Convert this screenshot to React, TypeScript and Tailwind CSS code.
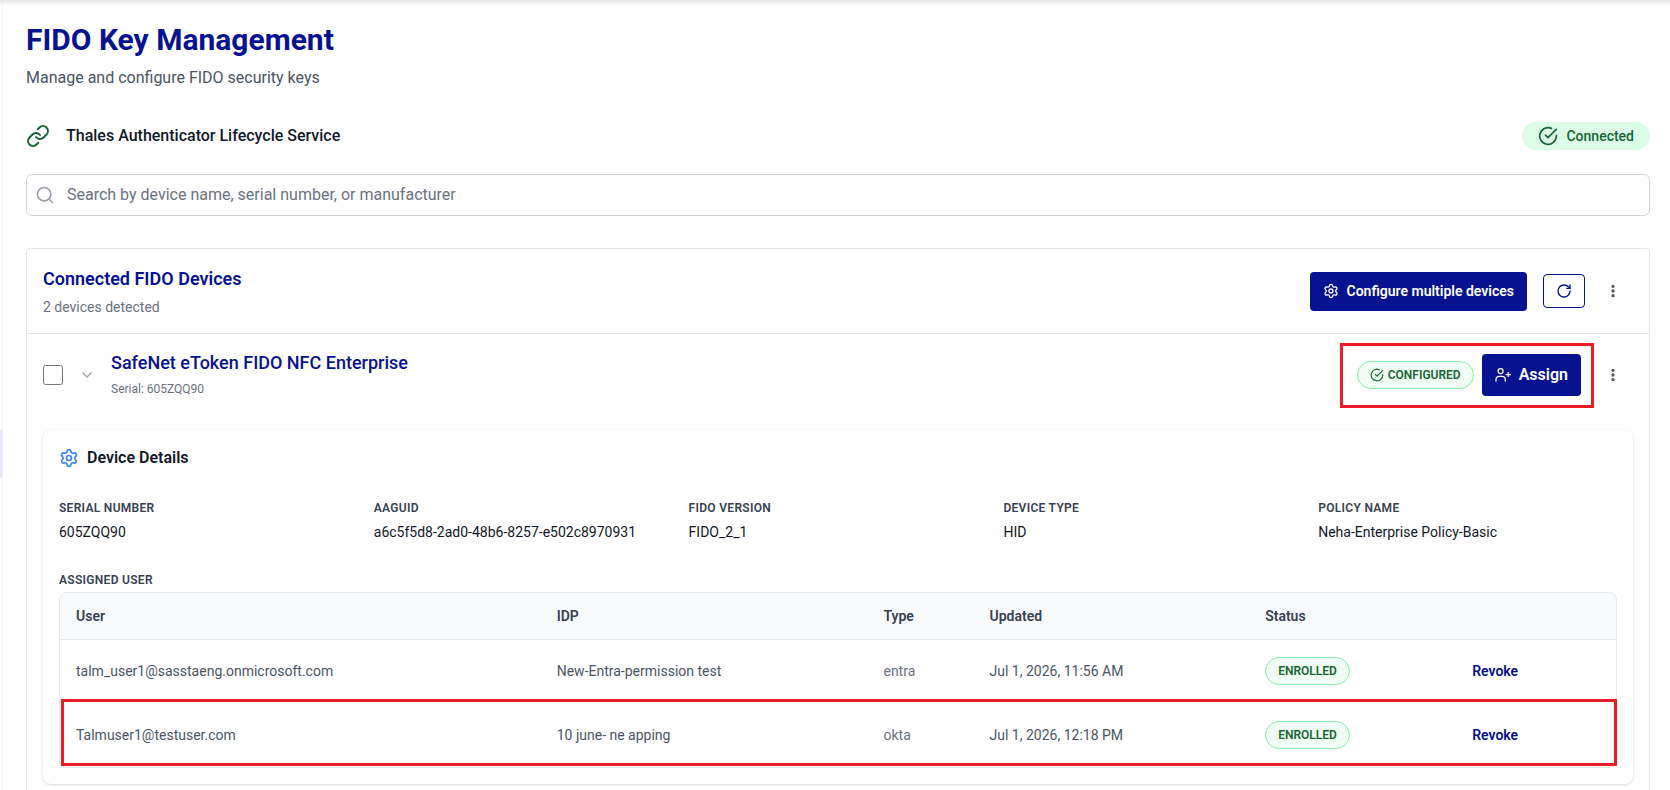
import { useState } from 'react';
import { ChevronDown, MoreVertical, RotateCw, Search, Settings } from 'lucide-react';
import { FiCheckCircle, FiLink } from 'react-icons/fi';
import clsx from 'clsx';

type Assignment = {
  user: string;
  idp: string;
  type: string;
  updated: string;
  status: string;
  highlighted?: boolean;
};

const details = [
  { label: 'Serial Number', value: '605ZQQ90' },
  { label: 'AAGUID', value: 'a6c5f5d8-2ad0-48b6-8257-e502c8970931' },
  { label: 'FIDO Version', value: 'FIDO_2_1' },
  { label: 'Device Type', value: 'HID' },
  { label: 'Policy Name', value: 'Neha-Enterprise Policy-Basic' },
];

const assignments: Assignment[] = [
  {
    user: 'talm_user1@sasstaeng.onmicrosoft.com',
    idp: 'New-Entra-permission test',
    type: 'entra',
    updated: 'Jul 1, 2026, 11:56 AM',
    status: 'ENROLLED',
  },
  {
    user: 'Talmuser1@testuser.com',
    idp: '10 june- ne apping',
    type: 'okta',
    updated: 'Jul 1, 2026, 12:18 PM',
    status: 'ENROLLED',
    highlighted: true,
  },
];

function UserAddIcon() {
  return (
    <svg width="16" height="16" viewBox="0 0 16 16" fill="none" stroke="currentColor" strokeWidth="1.25" strokeLinecap="round" aria-hidden="true">
      <circle cx="5.6" cy="4" r="2.5" />
      <path d="M1 14v-1.300C1 10.600 2.600 9.300 4.300 9.300h2.700c1.700 0 3.300 1.300 3.300 3.400V14" />
      <path d="M13.200 5.400v4.200M11.100 7.500h4.200" />
    </svg>
  );
}

function StatusPill({ children }: { children: React.ReactNode }) {
  return (
    <span className="inline-flex h-7 items-center gap-1 rounded-full border border-[#86efac] bg-[#f0fdf4] px-3 text-xs font-semibold text-[#166534]">
      {children}
    </span>
  );
}

function KebabButton({ label }: { label: string }) {
  return (
    <button type="button" aria-label={label} className="flex size-10 items-center justify-center text-[#4b5563]">
      <MoreVertical size={16} fill="currentColor" strokeWidth={3} />
    </button>
  );
}

function AssignedUsers() {
  return (
    <div className="rounded-lg border border-[#e5e7eb]">
      <table className="w-full text-left text-sm text-[#4b5563]">
        <thead className="text-[#374151]">
          <tr className="h-[46px] border-b border-[#e5e7eb]">
            <th className="rounded-tl-lg bg-[#f9fafb] px-4 font-semibold">User</th>
            <th className="bg-[#f9fafb] px-4 font-semibold">IDP</th>
            <th className="bg-[#f9fafb] px-4 font-semibold">Type</th>
            <th className="bg-[#f9fafb] px-4 font-semibold">Updated</th>
            <th className="bg-[#f9fafb] px-4 font-semibold">Status</th>
            <th className="rounded-tr-lg bg-[#f9fafb] px-4" />
          </tr>
        </thead>
        <tbody>
          {assignments.map(row => (
            <tr key={row.user} className={clsx('h-16', row.highlighted && 'relative')}>
              <td className="px-4">
                {row.user}
                {row.highlighted && (
                  <span className="pointer-events-none absolute -top-1 -right-px bottom-px left-px border-3 border-[#ed1c24]" />
                )}
              </td>
              <td className="px-4">{row.idp}</td>
              <td className="px-4 text-[#6b7280]">{row.type}</td>
              <td className="px-4">{row.updated}</td>
              <td className="px-4"><StatusPill>{row.status}</StatusPill></td>
              <td className="px-4">
                <button type="button" className="px-[13px] font-semibold text-[#06128f]">Revoke</button>
              </td>
            </tr>
          ))}
        </tbody>
      </table>
    </div>
  );
}

function DeviceDetails() {
  return (
    <section className="rounded-lg bg-white p-4 shadow-[0_1px_3px_rgba(0,0,0,0.16)]">
      <div className="flex items-center gap-2">
        <Settings size={20} className="text-[#3b82f6]" />
        <h4 className="text-base font-semibold text-[#111827]">Device Details</h4>
      </div>
      <dl className="mt-[30px] grid grid-cols-5 gap-4">
        {details.map(item => (
          <div key={item.label}>
            <dt className="text-xs font-semibold tracking-wide text-[#374151] uppercase">{item.label}</dt>
            <dd className="mt-1.5 text-sm text-[#111827]">{item.value}</dd>
          </div>
        ))}
      </dl>
      <h5 className="mt-[30px] mb-1 text-xs font-semibold tracking-wide text-[#374151] uppercase">Assigned User</h5>
      <AssignedUsers />
    </section>
  );
}

export default function App() {
  const [query, setQuery] = useState('');
  const [selected, setSelected] = useState(false);

  return (
    <div className="relative flex min-h-screen overflow-hidden bg-white font-[Roboto,sans-serif]">
      {/* bottom shadow of the app header */}
      <div className="pointer-events-none absolute inset-x-0 top-0 h-1.5 bg-linear-to-b from-[#e5e5e9] to-transparent" />
      {/* collapsed side navigation */}
      <nav aria-label="Main" className="w-[3px] shrink-0 border-r border-[#f3f4f6] pt-[430px]">
        <div className="h-12 bg-[#e6e8f6]" />
      </nav>

      <main className="min-w-0 flex-1 pt-5 pr-5 pl-[23px]">
        <h1 className="text-3xl leading-10 font-bold text-[#06128f]">FIDO Key Management</h1>
        <p className="mt-1.5 text-base text-[#4b5563]">Manage and configure FIDO security keys</p>

        <div className="mt-8 flex items-center justify-between">
          <div className="flex items-center gap-4">
            <FiLink size={24} className="text-[#166534]" />
            <h2 className="text-base font-medium text-[#111827]">Thales Authenticator Lifecycle Service</h2>
          </div>
          <span className="flex h-7 items-center gap-2 rounded-full bg-[#dcfce7] px-4 text-sm font-medium text-[#166534]">
            <FiCheckCircle size={20} />
            Connected
          </span>
        </div>

        <label className="mt-6 flex h-[42px] items-center gap-3 rounded-md border border-[#d1d5db] px-2">
          <Search size={20} className="text-[#9ca3af]" />
          <input
            type="text"
            value={query}
            onChange={e => setQuery(e.target.value)}
            aria-label="Search devices"
            placeholder="Search by device name, serial number, or manufacturer"
            className="flex-1 text-base outline-none placeholder:text-[#6b7280]"
          />
        </label>

        <section className="mt-8 rounded-t border border-b-0 border-[#e5e7eb]">
          <div className="flex h-[85px] items-center justify-between border-b border-[#e5e7eb] px-4">
            <div>
              <h3 className="text-lg font-semibold text-[#06128f]">Connected FIDO Devices</h3>
              <p className="mt-1 text-sm text-[#6b7280]">2 devices detected</p>
            </div>
            <div className="flex items-center gap-2">
              <div className="flex items-center gap-4">
                <button type="button" className="flex h-[39px] items-center gap-2 rounded bg-[#06128f] px-[13px] text-sm font-semibold text-white">
                  <Settings size={16} />
                  Configure multiple devices
                </button>
                <button type="button" aria-label="Refresh" className="flex h-[34px] w-[42px] items-center justify-center rounded border border-[#06128f] text-[#06128f]">
                  <RotateCw size={16} />
                </button>
              </div>
              <KebabButton label="Device list actions" />
            </div>
          </div>

          <div className="px-4 pb-5">
            <div className="flex h-[82px] items-center">
              <input
                type="checkbox"
                checked={selected}
                onChange={e => setSelected(e.target.checked)}
                aria-label="Select SafeNet eToken FIDO NFC Enterprise"
                className="size-5"
              />
              <button type="button" aria-label="Collapse device" className="mx-4 flex size-4 items-center justify-center text-[#9ca3af]">
                <ChevronDown size={16} />
              </button>
              <div className="flex-1 pb-1">
                <h3 className="text-lg font-medium text-[#06128f]">SafeNet eToken FIDO NFC Enterprise</h3>
                <p className="mt-1 text-xs text-[#6b7280]">Serial: 605ZQQ90</p>
              </div>
              <div className="relative flex items-center gap-2">
                <div className="pointer-events-none absolute -top-[11px] -right-[13px] -bottom-3 -left-[17px] border-3 border-[#ed1c24]" />
                <StatusPill>
                  <FiCheckCircle size={14} />
                  CONFIGURED
                </StatusPill>
                <button type="button" className="flex h-[42px] items-center gap-2 rounded bg-[#06128f] px-[13px] text-base font-semibold text-white">
                  <UserAddIcon />
                  Assign
                </button>
              </div>
              <div className="ml-3">
                <KebabButton label="Device actions" />
              </div>
            </div>
            <div className="pt-3.5">
              <DeviceDetails />
            </div>
          </div>
        </section>
      </main>
    </div>
  );
}
